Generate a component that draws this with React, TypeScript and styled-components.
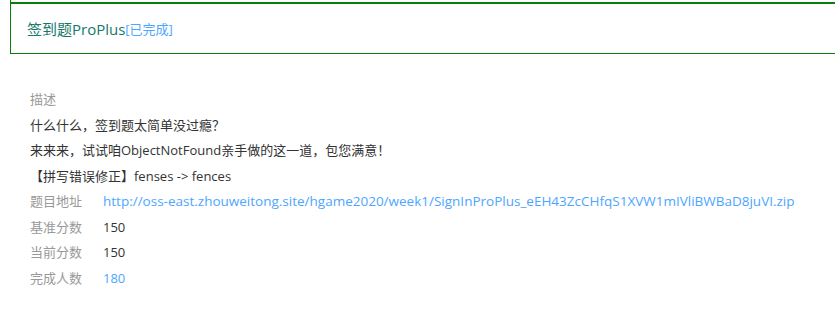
import React from "react";
import styled, { createGlobalStyle } from "styled-components";

const Global = createGlobalStyle`
  html, body { margin: 0; padding: 0; background: #fff; overflow: hidden; }
  body { font-family: "Open Sans", "Noto Sans CJK SC", sans-serif; }
`;

const Page = styled.div`
  width: 835px;
  height: 316px;
  display: flex;
  flex-direction: column;
`;

const Panel = styled.div`
  margin-left: 10px;
  padding-top: 2px;
  border-left: 1px solid #0a7d0a;
  border-bottom: 1px solid #0a7d0a;
`;

const Header = styled.div`
  border-top: 2px solid #0a7d0a;
  height: 49px;
  display: flex;
  align-items: center;
  padding-left: 16px;
`;

const Title = styled.span`
  font-size: 15px;
  color: #16786c;
`;

const Status = styled.span`
  font-size: 13px;
  color: #4da6ff;
`;

const Body = styled.div`
  padding: 33px 0 0 30px;
  font-size: 13px;
  color: #333;
`;

const Line = styled.div<{ $muted?: boolean }>`
  height: 25.5px;
  line-height: 25.5px;
  white-space: nowrap;
  color: ${(p) => (p.$muted ? "#999" : "#333")};
`;

const Row = styled.div`
  display: grid;
  grid-template-columns: 73px 1fr;
  height: 25.5px;
  line-height: 25.5px;
  white-space: nowrap;
`;

const Label = styled.span`
  color: #999;
`;

const Value = styled.span<{ $link?: boolean }>`
  color: ${(p) => (p.$link ? "#4da6ff" : "#333")};
`;

const Url = styled(Value)`
  font-size: 13.5px;
`;

export default function App() {
  return (
    <Page>
      <Global />
      <Panel>
        <Header>
          <Title>签到题ProPlus</Title>
          <Status>[已完成]</Status>
        </Header>
      </Panel>
      <Body>
        <Line $muted>描述</Line>
        <Line>什么什么，签到题太简单没过瘾？</Line>
        <Line>来来来，试试咱ObjectNotFound亲手做的这一道，包您满意！</Line>
        <Line>【拼写错误修正】fenses -&gt; fences</Line>
        <Row>
          <Label>题目地址</Label>
          <Url $link>http://oss-east.zhouweitong.site/hgame2020/week1/SignInProPlus_eEH43ZcCHfqS1XVW1mIVliBWBaD8juVI.zip</Url>
        </Row>
        <Row>
          <Label>基准分数</Label>
          <Value>150</Value>
        </Row>
        <Row>
          <Label>当前分数</Label>
          <Value>150</Value>
        </Row>
        <Row>
          <Label>完成人数</Label>
          <Value $link>180</Value>
        </Row>
      </Body>
    </Page>
  );
}
